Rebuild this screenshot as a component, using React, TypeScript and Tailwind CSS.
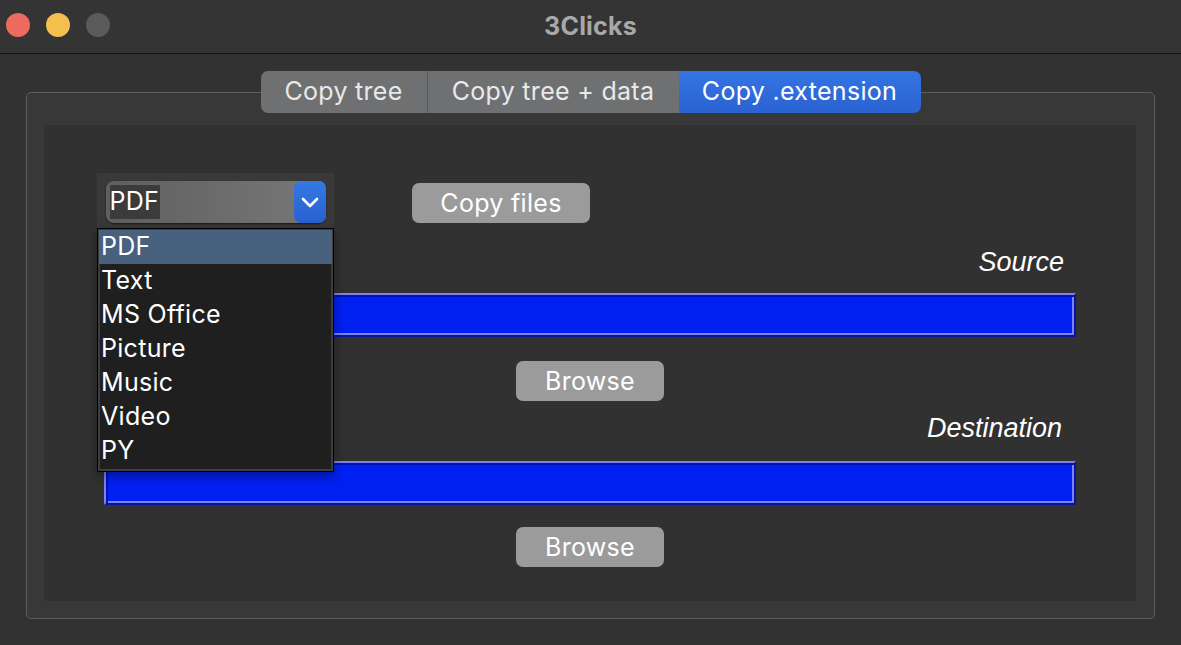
import { useState } from 'react';

const OPTIONS = ['PDF', 'Text', 'MS Office', 'Picture', 'Music', 'Video', 'PY'];
const TABS = ['Copy tree', 'Copy tree + data', 'Copy .extension'];

function PathField() {
  return (
    <div
      className="ml-[60px] h-[44px] w-[972px] border-2 border-t-[#7d82ee] border-l-[#7d82ee] border-r-[#0714a0] border-b-[#0714a0] bg-[#0020f2] shadow-[inset_2px_2px_0_#0012b4,inset_-2px_-2px_0_#7d82ee]"
    />
  );
}

function GreyButton({ label, className = '' }: { label: string; className?: string }) {
  return (
    <button className={`h-[40px] rounded-[7px] bg-[#9b9b9b] text-[25px] leading-none tracking-[0.3px] text-white ${className}`}>
      {label}
    </button>
  );
}

export default function App() {
  const [tab] = useState(2);
  const [selected] = useState('PDF');

  return (
    <div className="h-[645px] w-[1181px] overflow-hidden bg-[#323232] font-['Inter','Liberation_Sans',sans-serif]">
      {/* Title bar */}
      <div className="relative flex h-[54px] items-center justify-center border-b border-[#141414] bg-[#343434]">
        <div className="absolute left-[6px] top-[13px] flex gap-[16px]">
          <span className="h-[24px] w-[24px] rounded-full bg-[#ed6a5e]" />
          <span className="h-[24px] w-[24px] rounded-full bg-[#f5bf4f]" />
          <span className="h-[24px] w-[24px] rounded-full bg-[#5a5a5a]" />
        </div>
        <span className="text-[25px] font-bold tracking-[0.2px] text-[#a8a8a8]">3Clicks</span>
      </div>

      {/* Tabs */}
      <div className="relative z-10 mt-[17px] flex justify-center">
        <div className="flex h-[42px] overflow-hidden rounded-[7px] text-[25px] tracking-[0.3px]">
          {TABS.map((t, i) => (
            <div
              key={t}
              className={`flex items-center justify-center ${
                i === tab
                  ? 'w-[242px] bg-gradient-to-b from-[#3375e2] to-[#2b62d2] text-white'
                  : i === 0
                  ? 'w-[167px] border-r border-[#58595b] bg-[#6f7072] text-[#e9e9e9]'
                  : 'w-[251px] bg-[#6f7072] text-[#e9e9e9]'
              }`}
            >
              {t}
            </div>
          ))}
        </div>
      </div>

      {/* Group box */}
      <div className="ml-[26px] mt-[-21px] h-[527px] w-[1129px] rounded-[5px] border border-[#5e5e5e] bg-[#383838] pl-[17px] pr-[17px] pt-[32px]">
        <div className="relative flex h-[476px] w-[1092px] flex-col bg-[#313131]">
          {/* Row: combo + copy files */}
          <div className="flex items-start pt-[48px]">
            <div className="ml-[53px] flex h-[55px] w-[237px] items-start justify-center bg-[#393939] pt-[8px]">
              <div className="flex h-[42px] w-[220px] items-center rounded-[8px] bg-gradient-to-r from-[#5f5f5f] to-[#787878] pl-[4px] shadow-[0_1px_2px_rgba(0,0,0,0.6)]">
                <span className="flex h-[34px] items-center bg-[#3b3b3b] pr-[1px] text-[25px] tracking-[0.3px] text-white">{selected}</span>
                <span className="ml-auto flex h-[42px] w-[32px] items-center justify-center rounded-[7px] bg-gradient-to-b from-[#3479e4] to-[#2a60d0]">
                  <svg width="18" height="11" viewBox="0 0 18 11" fill="none">
                    <path d="M2 2l7 7 7-7" stroke="white" strokeWidth="2.6" strokeLinecap="round" strokeLinejoin="round" />
                  </svg>
                </span>
              </div>
            </div>
            <GreyButton label="Copy files" className="ml-[78px] mt-[10px] w-[178px]" />
          </div>

          {/* Source */}
          <div className="mt-[19px] pr-[72px] text-right font-['Liberation_Sans',sans-serif] text-[27px] italic leading-[30px] text-white">
            Source
          </div>
          <div className="mt-[16px]">
            <PathField />
          </div>
          <GreyButton label="Browse" className="mx-auto mt-[24px] w-[148px]" />

          {/* Destination */}
          <div className="mt-[12px] pr-[74px] text-right font-['Liberation_Sans',sans-serif] text-[27px] italic leading-[30px] text-white">
            Destination
          </div>
          <div className="mt-[18px]">
            <PathField />
          </div>
          <GreyButton label="Browse" className="mx-auto mt-[22px] w-[148px]" />

          {/* Open dropdown list */}
          <div className="absolute left-[53px] top-[103px] w-[237px] border border-black bg-[#1f1f1f] pb-[3px] pl-[1px] pr-[1px] pt-[1px] shadow-[inset_0_0_0_2px_#3d3d3d,0_4px_10px_rgba(0,0,0,0.4)]">
            {OPTIONS.map((o) => (
              <div
                key={o}
                className={`flex h-[34px] items-center pl-[2px] text-[25px] tracking-[0.3px] text-white ${o === selected ? 'bg-[#47617f]' : ''}`}
              >
                {o}
              </div>
            ))}
          </div>
        </div>
      </div>
    </div>
  );
}
